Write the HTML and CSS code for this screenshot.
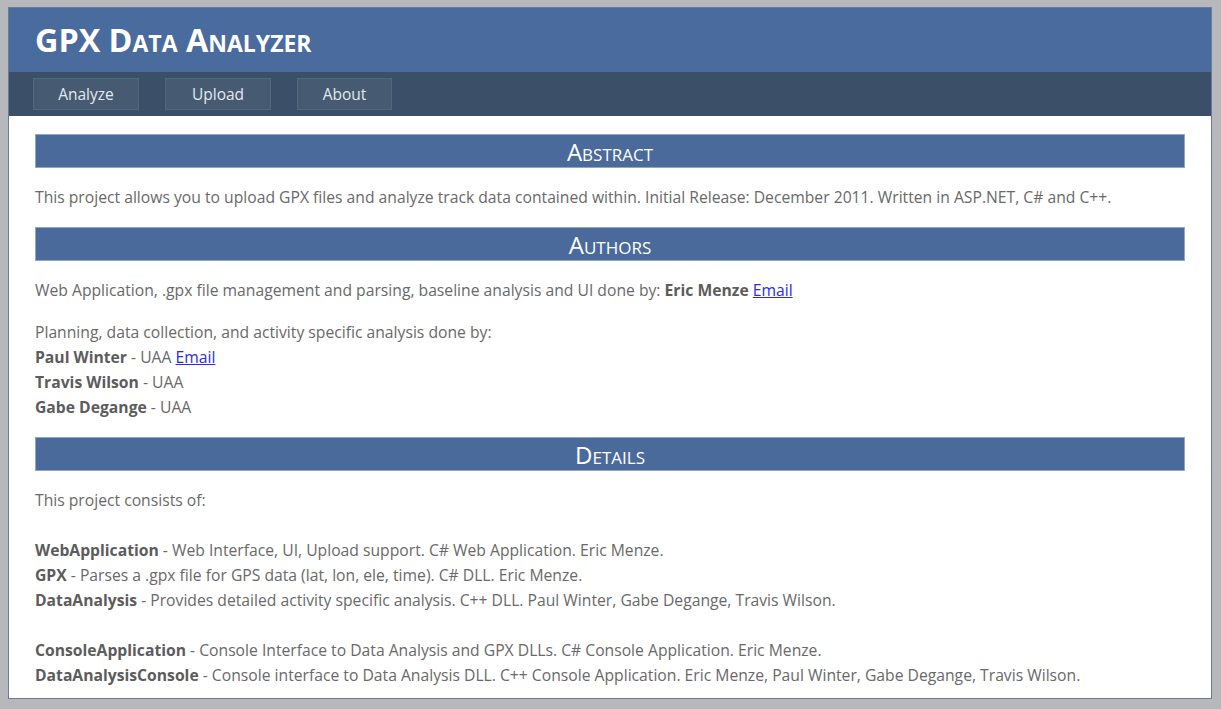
FILE: index.html
```html
<!DOCTYPE html>
<html>
<head>
<meta charset="utf-8">
<title>GPX Data Analyzer</title>
<link rel="stylesheet" href="styles.css">
</head>
<body>
<div class="page">
  <header class="header">
    <h1 class="title">GPX Data Analyzer</h1>
  </header>
  <nav class="menu">
    <a class="menu-item item-analyze" href="#">Analyze</a>
    <a class="menu-item item-upload" href="#">Upload</a>
    <a class="menu-item item-about" href="#">About</a>
  </nav>
  <main class="main">
    <h2 class="section-title">Abstract</h2>
    <p class="text">This project allows you to upload GPX files and analyze track data contained within. Initial Release: December 2011. Written in ASP.NET, C# and C++.</p>
    <h2 class="section-title">Authors</h2>
    <p class="text">Web Application, .gpx file management and parsing, baseline analysis and UI done by: <b>Eric Menze</b> <a class="link" href="#">Email</a></p>
    <p class="text">Planning, data collection, and activity specific analysis done by:<br>
    <b>Paul Winter</b> - UAA <a class="link" href="#">Email</a><br>
    <b>Travis Wilson</b> - UAA<br>
    <b>Gabe Degange</b> - UAA</p>
    <h2 class="section-title">Details</h2>
    <p class="text last">This project consists of:<br><br>
    <b>WebApplication</b> - Web Interface, UI, Upload support. C# Web Application. Eric Menze.<br>
    <b>GPX</b> - Parses a .gpx file for GPS data (lat, lon, ele, time). C# DLL. Eric Menze.<br>
    <b>DataAnalysis</b> - Provides detailed activity specific analysis. C++ DLL. Paul Winter, Gabe Degange, Travis Wilson.<br><br>
    <b>ConsoleApplication</b> - Console Interface to Data Analysis and GPX DLLs. C# Console Application. Eric Menze.<br>
    <b>DataAnalysisConsole</b> - Console interface to Data Analysis DLL. C++ Console Application. Eric Menze, Paul Winter, Gabe Degange, Travis Wilson.</p>
  </main>
</div>
</body>
</html>
```
FILE: styles.css
```css
html, body {
  margin: 0;
  padding: 0;
  background: #b7b8bc;
}
body {
  font-family: "Open Sans", "Noto Sans", sans-serif;
  color: #696969;
  padding: 7px 9px 9px 8px;
}
.page {
  border: 1px solid #6d7c90;
  background: #ffffff;
}
.header {
  background: #4a6b9e;
  height: 64px;
  display: flex;
  align-items: center;
  padding-left: 26px;
}
.title {
  margin: 0;
  font-size: 32.3px;
  font-variant: small-caps;
  font-weight: 700;
  color: #ffffff;
  letter-spacing: 0;
  line-height: 1;
  padding-bottom: 2px;
}
.menu {
  background: #3b5068;
  height: 44px;
  display: flex;
  align-items: center;
  gap: 26px;
  padding-left: 24px;
}
.menu-item {
  box-sizing: border-box;
  height: 32px;
  display: flex;
  align-items: center;
  justify-content: center;
  background: #465b72;
  border: 1px solid #52667c;
  color: #e2e8ef;
  text-decoration: none;
  font-size: 15.5px;
  padding-bottom: 1px;
}
.item-analyze, .item-upload { width: 106px; }
.item-about { width: 95px; }
.main {
  padding: 18px 26px 10px 26px;
}
.section-title {
  box-sizing: border-box;
  height: 34px;
  margin: 0;
  background: #4a6a9c;
  border: 1px solid #8fa6c7;
  color: #ffffff;
  font-variant: small-caps;
  font-weight: 400;
  font-size: 24px;
  line-height: 33px;
  text-align: center;
}
.text {
  margin: 17px 0 17px 0;
  font-size: 15.7px;
  line-height: 25px;
}
.text b {
  color: #5c5c5c;
}
.text.last {
  margin-bottom: 0;
}
.link {
  color: #2a2ae8;
  text-decoration: underline;
}
```
